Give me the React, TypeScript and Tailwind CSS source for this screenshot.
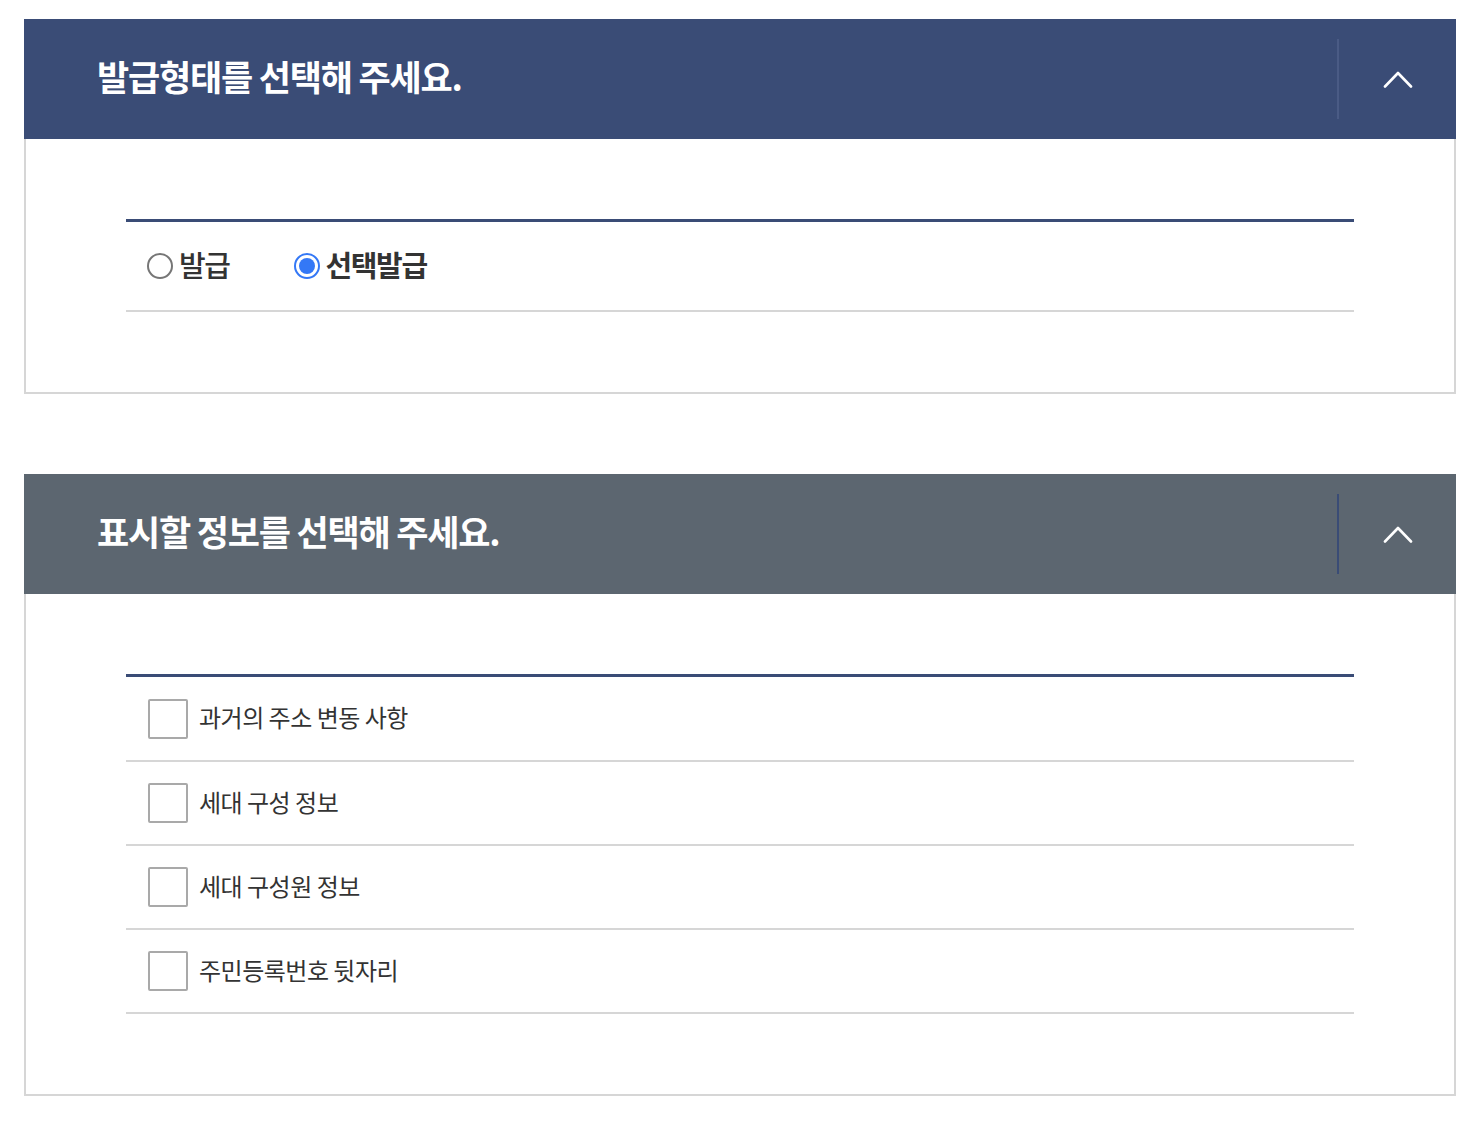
import React, { useState } from 'react';

const FONT = '"Noto Sans CJK KR", "Noto Sans", sans-serif';

const Chevron = () => (
  <svg width="30" height="18" viewBox="0 0 30 18" fill="none">
    <path d="M2 16.5 L15 3 L28 16.5" stroke="#fff" strokeWidth="2.6" strokeLinecap="round" strokeLinejoin="round" />
  </svg>
);

interface PanelProps {
  title: string;
  headerBg: string;
  dividerColor: string;
  children: React.ReactNode;
}

const Panel: React.FC<PanelProps> = ({ title, headerBg, dividerColor, children }) => (
  <section className="w-[1432px]">
    <div className={`flex items-center h-[120px] ${headerBg}`}>
      <h2 className="flex-1 pl-[73px] text-white text-[35px] font-bold tracking-[-1.2px] leading-none pb-[7px]">{title}</h2>
      <button className={`flex items-center justify-center w-[119px] h-[80px] border-l-2 ${dividerColor}`}>
        <Chevron />
      </button>
    </div>
    <div className="border-2 border-t-0 border-[#d6d6d6] px-[100px] py-[80px]">
      <div className="border-t-[3px] border-[#3a4c76]">{children}</div>
    </div>
  </section>
);

const Radio = ({ checked, label, onClick }: { checked: boolean; label: string; onClick: () => void }) => (
  <button onClick={onClick} className="flex items-center gap-[6px]">
    {checked ? (
      <span className="w-[26px] h-[26px] rounded-full border-2 border-[#3478f6] flex items-center justify-center">
        <span className="w-[16px] h-[16px] rounded-full bg-[#3478f6]" />
      </span>
    ) : (
      <span className="w-[26px] h-[26px] rounded-full border-2 border-[#767676]" />
    )}
    <span className={`text-[29px] tracking-[-1.4px] text-[#333] leading-none pb-[3px] ${checked ? 'font-bold' : 'font-medium'}`}>{label}</span>
  </button>
);

const items = ['과거의 주소 변동 사항', '세대 구성 정보', '세대 구성원 정보', '주민등록번호 뒷자리'];

export default function App() {
  const [type, setType] = useState<'all' | 'select'>('select');
  const [checked, setChecked] = useState<boolean[]>([false, false, false, false]);

  return (
    <div className="min-h-screen bg-white pt-[19px] pl-[24px] pb-[26px] flex flex-col gap-[80px]" style={{ fontFamily: FONT }}>
      <Panel title="발급형태를 선택해 주세요." headerBg="bg-[#3a4c76]" dividerColor="border-[#4a5b85]">
        <div className="flex items-center gap-[64px] h-[90px] pl-[21px] border-b-2 border-[#d6d6d6]">
          <Radio checked={type === 'all'} label="발급" onClick={() => setType('all')} />
          <Radio checked={type === 'select'} label="선택발급" onClick={() => setType('select')} />
        </div>
      </Panel>

      <Panel title="표시할 정보를 선택해 주세요." headerBg="bg-[#5c6670]" dividerColor="border-[#3a4c76]">
        {items.map((label, i) => (
          <label key={label} className={`flex items-center gap-[11px] pl-[22px] border-b-2 border-[#d6d6d6] cursor-pointer ${i === 0 ? 'h-[85px]' : 'h-[84px]'}`}>
            <input
              type="checkbox"
              className="sr-only"
              checked={checked[i]}
              onChange={() => setChecked(checked.map((c, j) => (j === i ? !c : c)))}
            />
            <span className="w-[40px] h-[40px] border-2 border-[#a9a9a9] rounded-[2px] bg-white flex items-center justify-center">
              {checked[i] && (
                <svg width="24" height="24" viewBox="0 0 24 24" fill="none">
                  <path d="M4 12 L10 18 L20 6" stroke="#3a4c76" strokeWidth="3" />
                </svg>
              )}
            </span>
            <span className="text-[24px] tracking-[-0.5px] text-[#333] leading-none pb-[3px]">{label}</span>
          </label>
        ))}
      </Panel>
    </div>
  );
}
